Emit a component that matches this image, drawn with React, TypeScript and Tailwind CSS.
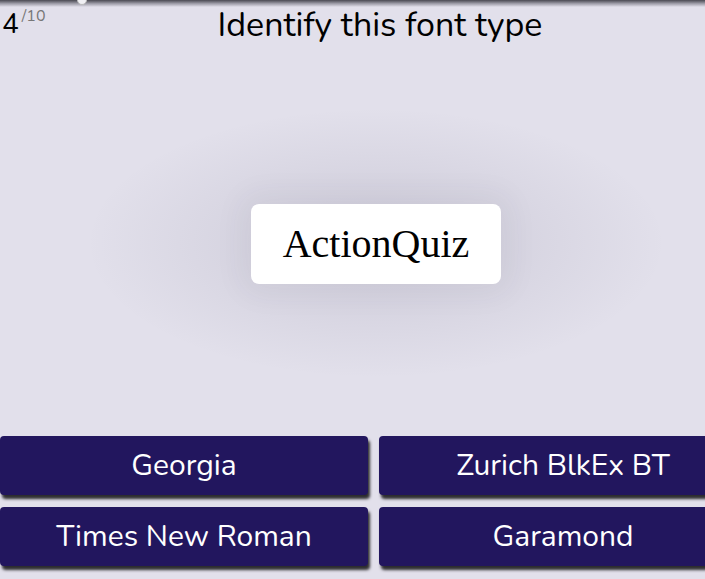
const options = ["Georgia", "Zurich BlkEx BT", "Times New Roman", "Garamond"];

export default function App() {
  return (
    <div className="relative w-[705px] h-[579px] overflow-hidden bg-[#e2e0eb] font-['Nunito','Noto_Sans',sans-serif] text-black">
      {/* top progress track */}
      <div className="absolute top-0 left-0 right-0 h-[7px] bg-gradient-to-b from-[#4a4a52] via-[#9c9ba6] to-transparent" />
      <div className="absolute -top-[5px] left-[77px] w-[10px] h-[10px] rounded-full bg-[#f0f0f4] border border-[#bbb]" />

      <div className="w-[752px] h-full flex flex-col">
        <div className="relative h-[50px] flex items-start justify-center pt-[5px]">
          <div className="absolute left-[2px] top-[9px] flex items-start">
            <span className="text-[28px] leading-[30px]">4</span>
            <span className="text-[16px] leading-[16px] text-[#777] ml-[3px] -mt-[1px]">/10</span>
          </div>
          <h1 className="text-[34px] leading-[40px] ml-[8px]">Identify this font type</h1>
        </div>

        <div className="flex-1 flex items-center justify-center pt-[2px] bg-[radial-gradient(ellipse_290px_135px_at_376px_50%,rgba(55,50,85,0.13),rgba(55,50,85,0.05)_60%,transparent)]">
          <div className="w-[250px] h-[80px] rounded-[8px] bg-white flex items-center justify-center shadow-[0_0_30px_10px_rgba(55,50,85,0.05)]">
            <span className="font-['Liberation_Serif','Times_New_Roman',serif] text-[40px] leading-none">ActionQuiz</span>
          </div>
        </div>

        <div className="grid grid-cols-[368px_368px] gap-x-[11px] gap-y-[12px] pb-[13px]">
          {options.map((o) => (
            <button
              key={o}
              className="h-[59px] rounded-[4px] bg-[#22165e] text-white text-[30px] shadow-[2px_4px_3px_rgba(0,0,0,0.8)] flex items-center justify-center"
            >
              {o}
            </button>
          ))}
        </div>
      </div>
    </div>
  );
}
